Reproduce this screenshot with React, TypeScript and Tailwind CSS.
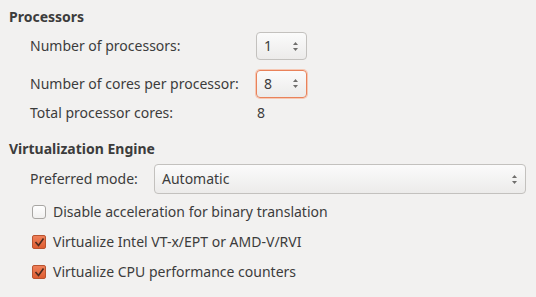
import React from 'react';

const Arrows = () => (
  <svg width="7" height="11" viewBox="0 0 7 11" className="text-[#6f6e6c]">
    <path d="M3.5 1 L6 4 L1 4 Z" fill="currentColor" />
    <path d="M3.5 10 L6 7 L1 7 Z" fill="currentColor" />
  </svg>
);

const Spin: React.FC<{ value: string; focused?: boolean }> = ({ value, focused }) => (
  <div
    className={`w-[51px] h-[28px] rounded-[4px] border flex items-center justify-between pl-[7px] pr-[7px] bg-gradient-to-b from-[#fbfbfb] to-[#ecebea] ${
      focused ? 'border-[#e9825a] shadow-[0_0_0_1px_#f6c8b4]' : 'border-[#c3c1be]'
    }`}
  >
    <span>{value}</span>
    <Arrows />
  </div>
);

const Check: React.FC<{ checked?: boolean; label: string }> = ({ checked, label }) => (
  <div className="flex items-center h-[30px] pl-[32px] gap-[7px]">
    {checked ? (
      <div className="w-[14px] h-[14px] rounded-[2px] border border-[#b9532f] bg-gradient-to-b from-[#ef8059] to-[#de5d31] flex items-center justify-center">
        <svg width="11" height="10" viewBox="0 0 11 10">
          <path d="M1.5 5 L4.5 8.5 L9.5 1.5" stroke="#4a2a1e" strokeWidth="1.6" fill="none" />
        </svg>
      </div>
    ) : (
      <div className="w-[14px] h-[14px] rounded-[3px] border border-[#a8a6a3] bg-gradient-to-b from-[#fefefe] to-[#f1f0ef]" />
    )}
    <span>{label}</span>
  </div>
);

export default function App() {
  return (
    <div className="w-[536px] h-[297px] bg-[#f2f1f0] text-[#3c3c3c] text-[14px] leading-[20px] font-['Noto_Sans',sans-serif] overflow-hidden">
      <div className="pt-[6px] pl-[9px] h-[28px] font-bold leading-[22px]">Processors</div>
      <div className="pl-[30px] mt-[4px] flex flex-col">
        <div className="flex items-center h-[28px]">
          <span className="w-[226px]">Number of processors:</span>
          <Spin value="1" />
        </div>
        <div className="flex items-center h-[29px] mt-[9px]">
          <span className="w-[226px]">Number of cores per processor:</span>
          <Spin value="8" focused />
        </div>
        <div className="flex items-center h-[20px] mt-[5px]">
          <span className="w-[227px]">Total processor cores:</span>
          <span>8</span>
        </div>
      </div>
      <div className="pl-[9px] mt-[16px] h-[20px] font-bold leading-[20px]">Virtualization Engine</div>
      <div className="flex items-center pl-[30px] mt-[5px]">
        <span className="w-[124px]">Preferred mode:</span>
        <div className="w-[372px] h-[30px] rounded-[4px] border border-[#c3c1be] bg-gradient-to-b from-[#fbfbfb] to-[#ecebea] flex items-center justify-between pl-[7px] pr-[7px]">
          <span>Automatic</span>
          <Arrows />
        </div>
      </div>
      <div className="mt-[3px]">
        <Check label="Disable acceleration for binary translation" />
        <Check checked label="Virtualize Intel VT-x/EPT or AMD-V/RVI" />
        <Check checked label="Virtualize CPU performance counters" />
      </div>
    </div>
  );
}
